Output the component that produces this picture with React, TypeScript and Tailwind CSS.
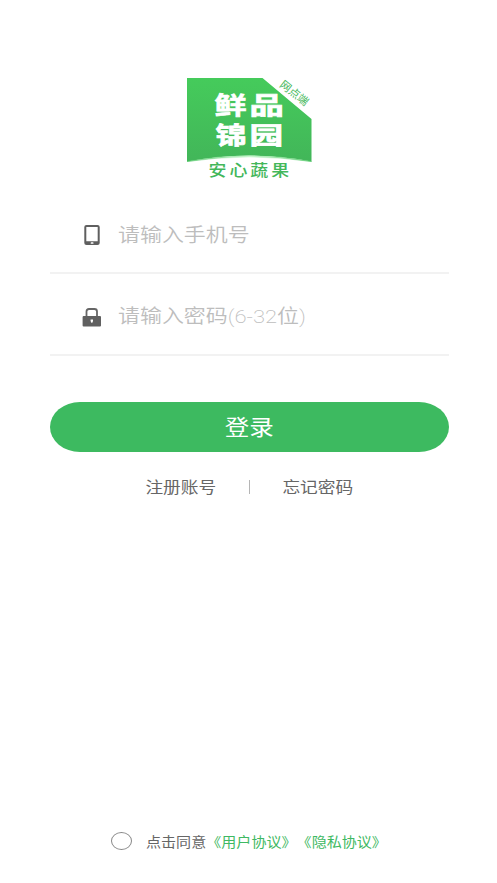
import React from 'react';
import clsx from 'clsx';

interface FieldProps {
    icon: React.ReactNode;
    children: React.ReactNode;
    className?: string;
}

const Logo: React.FC = () => (
    <svg width="126" height="104" viewBox="0 0 126 104" className="block font-['Noto_Sans_CJK_SC',sans-serif]">
        <defs>
            <linearGradient id="leaf" x1="0" y1="0" x2="0" y2="1">
                <stop offset="0" stopColor="#45cb5b" />
                <stop offset="1" stopColor="#42b659" />
            </linearGradient>
            <linearGradient id="shine" x1="0" y1="0" x2="1" y2="0">
                <stop offset="0" stopColor="#4fc765" />
                <stop offset="0.5" stopColor="#c9f7cf" />
                <stop offset="1" stopColor="#4fc765" />
            </linearGradient>
        </defs>
        <path d="M1 1H76.500L125.500 42V84.500Q63 73 1 84.500Z" fill="url(#leaf)" />
        <path d="M1 84.500Q63 73 125.500 84.500Q63 75.500 1 84.500Z" fill="url(#shine)" stroke="url(#shine)" strokeWidth="0.500" />
        <g fill="#fff" stroke="#fff" strokeWidth="0.700" fontWeight="700" fontSize="23.500">
            <text transform="translate(28.500 36.700) scale(1.360 1)">鲜</text>
            <text transform="translate(63.500 37.200) scale(1.460 1.040)">品</text>
            <text transform="translate(29.500 66.700) scale(1.320 1)">锦</text>
            <text transform="translate(63.500 66.700) scale(1.430 1)">园</text>
        </g>
        <text transform="translate(22.500 99.400) scale(1.120 1)" fontSize="16" fontWeight="500" letterSpacing="2.700" fill="#43b75a">安心蔬果</text>
        <text transform="translate(93 9) rotate(38)" fontSize="11" fill="#43b75a">网点端</text>
    </svg>
);

const PhoneIcon: React.FC = () => (
    <svg width="16" height="20" viewBox="0 0 16 20">
        <path fillRule="evenodd" fill="#5f5f5f" d="M2.500 0H13.500Q15.700 0 15.700 2V18Q15.700 20 13.500 20H2.500Q.3 20 .3 18V2Q.3 0 2.500 0ZM2.300 2V16.300H13.700V2Z" />
        <rect x="6.700" y="17.300" width="2.800" height="1.500" rx=".6" fill="#fff" />
    </svg>
);

const LockIcon: React.FC = () => (
    <svg width="20" height="19" viewBox="0 0 20 19">
        <path d="M4.500 9V3.500Q4.500 1 7 1H12.500Q15 1 15 3.500V9" fill="none" stroke="#666" strokeWidth="1.800" />
        <rect x=".6" y="8" width="18.400" height="10.500" rx="1" fill="#606060" />
        <path d="M8.600 11.500H11V13L10.300 14.800H9.300L8.600 13Z" fill="#fff" />
    </svg>
);

const Field: React.FC<FieldProps> = ({ icon, children, className }) => (
    <label className={clsx('flex w-[399px] items-center border-b-2 border-[#f2f2f2] pl-8', className)}>
        <span className="flex w-5 justify-center">{icon}</span>
        <span className="ml-4 origin-left scale-x-[1.155] whitespace-nowrap pb-[3px] text-[19px] leading-7 font-[350] text-[#bdbdbd]">{children}</span>
    </label>
);

const App: React.FC = () => (
    <main className="flex h-[883px] w-[497px] flex-col overflow-hidden bg-white px-[50px] pt-[77px] font-['Noto_Sans_CJK_SC',sans-serif] text-[#666]">
        <div className="flex justify-center">
            <Logo />
        </div>

        <form className="mt-[13px]">
            <Field icon={<PhoneIcon />} className="h-[80px] pt-1">请输入手机号</Field>
            <Field icon={<LockIcon />} className="h-[82px] pt-[6px]">
                请输入密码<span className="font-['Roboto',sans-serif] font-extralight">(6-32</span>位<span className="font-['Roboto',sans-serif] font-extralight">)</span>
            </Field>
            <button type="button" className="mt-[46px] flex h-[50px] w-[399px] items-center justify-center rounded-[30px/25px] bg-[#3dba60] pb-0.5 text-white">
                <span className="scale-x-[1.15] text-[21.300px] leading-8">登录</span>
            </button>
        </form>

        <nav className="mt-[23px] flex h-6 w-[399px] items-center justify-center text-[15.400px]">
            <a className="scale-x-[1.15]">注册账号</a>
            <span className="mx-[37px] h-3.5 w-px bg-[#b5b5b5]" />
            <a className="scale-x-[1.15]">忘记密码</a>
        </nav>

        <footer className="mt-auto mb-[30px] flex h-6 items-center pl-[61px]">
            <span className="h-[18px] w-[21px] shrink-0 rounded-[50%] border border-[#888]" />
            <p className="ml-3.5 origin-left scale-x-[1.15] whitespace-nowrap pt-0.5 text-[13.100px] [text-spacing-trim:space-all]">
                点击同意<a className="text-[#3fb963]">《用户协议》</a><a className="text-[#3fb963]">《隐私协议》</a>
            </p>
        </footer>
    </main>
);

export default App;
